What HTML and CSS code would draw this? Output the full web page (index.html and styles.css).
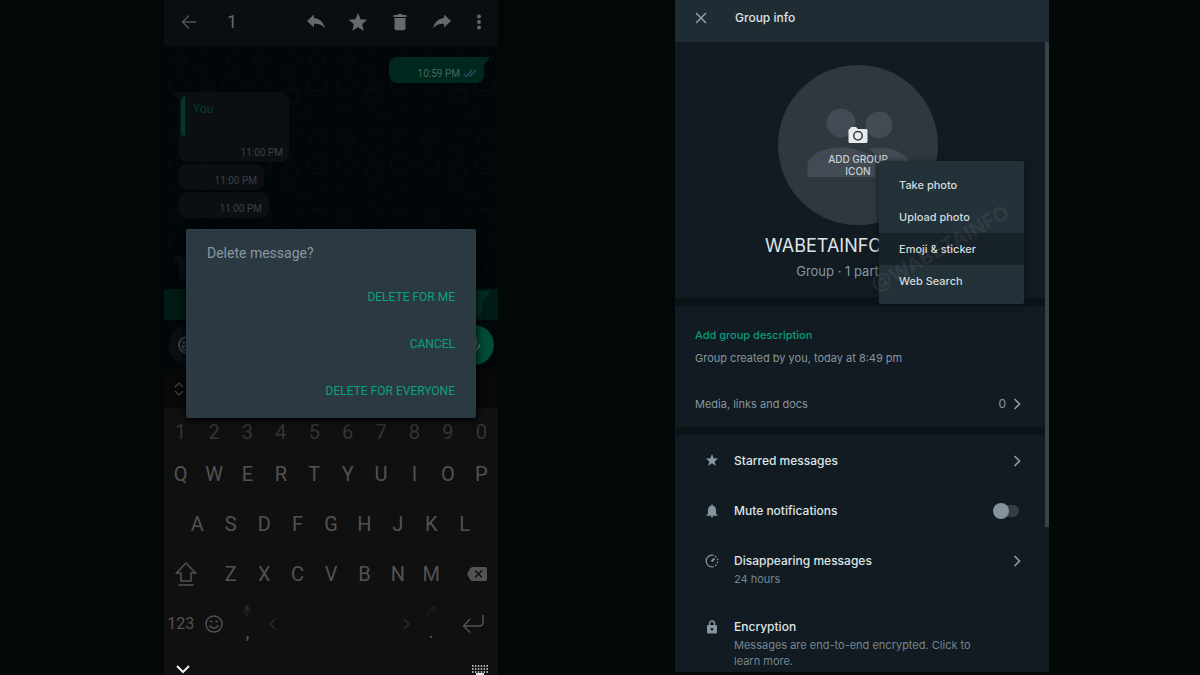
FILE: index.html
```html
<!DOCTYPE html>
<html lang="en">
<head>
<meta charset="utf-8">
<title>Group info</title>
<link rel="stylesheet" href="styles.css">
</head>
<body>
<main class="stage">
  <section class="phone" aria-label="Chat">
    <header class="action-bar">
      <button class="icon-btn back" aria-label="Back"><svg width="16" height="16" viewBox="0 0 16 16" fill="none" stroke="currentColor" stroke-width="1.5"><path d="M15 8H2M8 1.500L1.500 8L8 14.500"/></svg></button>
      <span class="count">1</span>
      <button class="icon-btn" aria-label="Reply"><svg width="20" height="20" viewBox="0 0 20 20" fill="currentColor"><path d="M8 6V2.500L1 9l7 6.500V11.800c5 0 8.500 1.200 11 4.700C18 11.500 15 7 8 6z"/></svg></button>
      <button class="icon-btn" aria-label="Star"><svg width="20" height="20" viewBox="0 0 20 20" fill="currentColor"><path d="M10 1l2.600 6.200 6.700.6-5.100 4.400 1.500 6.600L10 15.300l-5.700 3.500 1.500-6.600L.7 7.800l6.700-.6z"/></svg></button>
      <button class="icon-btn" aria-label="Delete"><svg width="20" height="20" viewBox="0 0 20 20" fill="currentColor"><path d="M4.500 6h11v10.500a1.700 1.700 0 0 1-1.700 1.700H6.200a1.700 1.700 0 0 1-1.700-1.700zM3.500 3H7l1-1h4l1 1h3.500v2h-13z"/></svg></button>
      <button class="icon-btn" aria-label="Forward"><svg width="20" height="20" viewBox="0 0 20 20" fill="currentColor"><path d="M12 6V2.500L19 9l-7 6.500V11.800c-5 0-8.500 1.200-11 4.700C2 11.500 5 7 12 6z"/></svg></button>
      <button class="icon-btn more" aria-label="More options"><svg width="6" height="20" viewBox="0 0 6 20" fill="currentColor"><circle cx="3" cy="4.500" r="1.900"/><circle cx="3" cy="10" r="1.900"/><circle cx="3" cy="15.500" r="1.900"/></svg></button>
    </header>

    <div class="chat">
      <svg class="doodles" width="100%" height="100%" aria-hidden="true">
        <defs>
          <pattern id="doodle" width="84" height="78" patternUnits="userSpaceOnUse">
            <g fill="none" stroke="#050c10" stroke-width="1">
              <circle cx="14" cy="14" r="8"/><circle cx="14" cy="14" r="4"/>
              <path d="M34 8q6-8 12 0t12 0M30 24l10-6 9 8-8 7zM66 6l12 5-6 12-10-6z"/>
              <path d="M6 36q8-9 15 0t-6 13q-13-3-9-13zM34 44h16v12H34zM38 44v-5h8v5"/>
              <circle cx="69" cy="40" r="10"/><path d="M64 42q5 6 10 0M4 66l10-7 9 9M32 68q8-10 15 0t16 0M68 60l9 9M77 60l-9 9"/>
              <path d="M25 30l5 5M54 30l-4 6M56 62q4-5 8-1M24 56l4-5"/>
            </g>
          </pattern>
        </defs>
        <rect width="100%" height="100%" fill="url(#doodle)"/>
      </svg>
      <div class="thread">
        <div class="bubble out"><time>10:59 PM</time><svg width="14" height="9" viewBox="0 0 14 9" fill="none" stroke="#23516a" stroke-width="1.400"><path d="M1 5l2.500 2.500L9 1M6.500 7.500L13 1"/></svg></div>
        <div class="bubble in quoted">
          <div class="quote">You</div>
          <time>11:00 PM</time>
        </div>
        <div class="bubble in short"><time>11:00 PM</time></div>
        <div class="bubble in medium"><time>11:00 PM</time></div>
      </div>
      <div class="hidden-bubble"></div>
      <div class="selected-row"><div class="selected-bubble"></div></div>
      <div class="composer">
        <div class="composer-field"><svg width="20" height="20" viewBox="0 0 20 20" fill="none" stroke="currentColor" stroke-width="2"><circle cx="10" cy="10" r="8"/><path d="M5.500 11h9a4.500 4.500 0 0 1-9 0z"/><circle cx="7" cy="7.500" r=".7"/><circle cx="13" cy="7.500" r=".7"/></svg></div>
        <button class="mic" aria-label="Record voice message"><svg width="20" height="20" viewBox="0 0 20 20" fill="none" stroke="currentColor" stroke-width="1.600"><rect x="7.800" y="2" width="4.400" height="9" rx="2.200" fill="currentColor"/><path d="M4.500 9.500a5.500 5.500 0 0 0 11 0M10 15v3"/></svg></button>
      </div>
    </div>

    <div class="suggestions"><svg width="10" height="14" viewBox="0 0 10 14" fill="none" stroke="currentColor" stroke-width="1.200"><path d="M1 5l4-4 4 4M1 9l4 4 4-4"/></svg></div>

    <div class="keyboard">
      <div class="keys digits"><button>1</button><button>2</button><button>3</button><button>4</button><button>5</button><button>6</button><button>7</button><button>8</button><button>9</button><button>0</button></div>
      <div class="keys"><button>Q</button><button>W</button><button>E</button><button>R</button><button>T</button><button>Y</button><button>U</button><button>I</button><button>O</button><button>P</button></div>
      <div class="keys home"><button>A</button><button>S</button><button>D</button><button>F</button><button>G</button><button>H</button><button>J</button><button>K</button><button>L</button></div>
      <div class="keys lower">
        <button class="shift" aria-label="Shift"><svg width="24" height="26" viewBox="0 0 24 26" fill="none" stroke="currentColor" stroke-width="1.500"><path d="M12 2L2.500 12H7v8h10v-8h4.500zM4.500 24h15"/></svg></button>
        <button>Z</button><button>X</button><button>C</button><button>V</button><button>B</button><button>N</button><button>M</button>
        <button class="erase" aria-label="Backspace"><svg width="20" height="14" viewBox="0 0 20 14"><path d="M5.500 0H18.500a1.500 1.500 0 0 1 1.500 1.500v11a1.500 1.500 0 0 1-1.500 1.500H5.500Q4 14 3 12.500L0 7l3-5.500Q4 0 5.500 0z" fill="currentColor"/><path d="M8 3.500l7 7M15 3.500l-7 7" stroke="#111" stroke-width="1.500"/></svg></button>
      </div>
      <div class="keys bottom">
        <button class="num">123</button>
        <button aria-label="Emoji"><svg width="18" height="18" viewBox="0 0 18 18" fill="none" stroke="currentColor" stroke-width="1.400"><circle cx="9" cy="9" r="8"/><path d="M4.500 10.500q4.500 5.500 9 0"/><path d="M5.300 7q1-1.500 2 0M10.700 7q1-1.500 2 0"/></svg></button>
        <button class="stack"><svg class="dim" width="10" height="12" viewBox="0 0 10 12" fill="none" stroke="currentColor"><rect x="3.500" y="1" width="3" height="5" rx="1.500" fill="currentColor"/><path d="M1.500 5a3.500 3.500 0 0 0 7 0M5 8.500V11"/></svg><span>,</span></button>
        <button class="space" aria-label="Space"><svg width="7" height="12" viewBox="0 0 7 12" fill="none" stroke="currentColor" stroke-width="1.200"><path d="M6 1L1 6l5 5"/></svg><svg width="7" height="12" viewBox="0 0 7 12" fill="none" stroke="currentColor" stroke-width="1.200"><path d="M1 1l5 5-5 5"/></svg></button>
        <button class="stack"><span class="dim alt">,!?</span><span>.</span></button>
        <button aria-label="Enter"><svg width="22" height="18" viewBox="0 0 22 18" fill="none" stroke="currentColor" stroke-width="1.500"><path d="M21 0v7q0 4-4 4H1.500M8 4L1.500 11 8 17.500"/></svg></button>
      </div>
      <div class="nav-row">
        <svg width="14" height="9" viewBox="0 0 14 9" fill="none" stroke="#eee" stroke-width="2"><path d="M1 1l6 6 6-6"/></svg>
        <svg width="16" height="10" viewBox="0 0 16 10" fill="none" stroke="#ddd"><path d="M0 1h16M0 4h16M0 7h16" stroke-width="1.500" stroke-dasharray="1.500 1.400"/><path d="M4 9h8" stroke-width="2"/></svg>
      </div>
    </div>

    <div class="dialog" role="dialog" aria-labelledby="dialog-title">
      <h2 id="dialog-title">Delete message?</h2>
      <button>DELETE FOR ME</button>
      <button>CANCEL</button>
      <button>DELETE FOR EVERYONE</button>
    </div>
  </section>

  <section class="panel" aria-label="Group info">
    <header class="panel-head">
      <button aria-label="Close"><svg width="12" height="12" viewBox="0 0 12 12" fill="none" stroke="currentColor" stroke-width="1.600"><path d="M1 1l10 10M11 1L1 11"/></svg></button>
      <h1>Group info</h1>
    </header>
    <div class="panel-body">
      <div class="scrollbar"></div>
      <div class="profile">
        <div class="avatar-wrap">
          <button class="avatar">
            <svg class="people" viewBox="0 0 160 160" fill="#424a53" aria-hidden="true"><circle cx="63" cy="58" r="14.500"/><circle cx="101" cy="60" r="13.500"/><path d="M29.500 112V101C29.500 89 47 82.500 63 82.500S97 89 97 101V112z"/><path d="M91 84Q97 83 102 83C117 83 132 90 132 101V112H101V101Q101 90 91 84z"/></svg>
            <svg class="camera" width="20" height="18" viewBox="0 0 20 18"><path d="M2 3Q2 1 4 1H8L10 3H18Q19.500 3 19.500 4.500V15.500Q19.500 17 18 17H2Q.5 17 .5 15.500V4Q.5 3 2 3z" fill="#e6eaed"/><circle cx="10" cy="9.800" r="4.200" fill="none" stroke="#343d43" stroke-width="1.500"/></svg>
            <span>ADD GROUP<br>ICON</span>
          </button>
          <div class="menu" role="menu">
            <button role="menuitem">Take photo</button>
            <button role="menuitem">Upload photo</button>
            <button role="menuitem" class="active">Emoji &amp; sticker</button>
            <button role="menuitem">Web Search</button>
            <span class="watermark">@WABETAINFO</span>
          </div>
        </div>
        <h2>WABETAINFO GROUP</h2>
        <p>Group · 1 participant</p>
      </div>

      <div class="about">
        <a class="add-desc" href="#">Add group description</a>
        <p>Group created by you, today at 8:49 pm</p>
        <button class="media"><span>Media, links and docs</span><span class="total">0</span><svg width="8" height="12" viewBox="0 0 8 12" fill="none" stroke="currentColor" stroke-width="1.700"><path d="M1.500 1l5 5-5 5"/></svg></button>
      </div>

      <div class="settings">
        <button class="row">
          <svg width="12" height="12" viewBox="0 0 20 20" fill="currentColor"><path d="M10 0l2.800 6.900 7.200.6-5.500 4.800 1.700 7.200L10 15.600l-6.200 3.900 1.700-7.200L0 7.500l7.200-.6z"/></svg>
          <span class="label">Starred messages</span>
          <svg class="chevron" width="8" height="12" viewBox="0 0 8 12" fill="none" stroke="currentColor" stroke-width="1.700"><path d="M1.500 1l5 5-5 5"/></svg>
        </button>
        <label class="row">
          <svg width="12" height="14" viewBox="0 0 12 14" fill="currentColor"><path d="M6 .5q1 0 1 1.200Q10 2.600 10 6v3.500l1.500 1.500v.7H.5V11L2 9.500V6q0-3.400 3-4.300Q5 .5 6 .5zM4.600 12.300h2.800q-.3 1.300-1.400 1.300t-1.400-1.300z"/></svg>
          <span class="label">Mute notifications</span>
          <input class="switch" type="checkbox">
        </label>
        <button class="row">
          <svg width="14" height="14" viewBox="0 0 14 14" fill="none" stroke="currentColor" stroke-width="1.300"><path d="M7 1.200A5.800 5.800 0 1 0 7 12.800"/><path d="M7 1.200A5.800 5.800 0 0 1 7 12.800" stroke-dasharray="1.600 1.600"/><path d="M6.500 7.500L9.500 4.500" stroke-width="1.800"/></svg>
          <span class="label">Disappearing messages<small>24 hours</small></span>
          <svg class="chevron" width="8" height="12" viewBox="0 0 8 12" fill="none" stroke="currentColor" stroke-width="1.700"><path d="M1.500 1l5 5-5 5"/></svg>
        </button>
        <button class="row">
          <svg width="12" height="14" viewBox="0 0 12 14"><path d="M3.500 6V3.500a2.500 2.500 0 0 1 5 0V6" fill="none" stroke="currentColor" stroke-width="1.400"/><rect x="1" y="5" width="10" height="8.500" rx="1" fill="currentColor"/><circle cx="6" cy="9.200" r="1.300" fill="#111b21"/></svg>
          <span class="label">Encryption<small>Messages are end-to-end encrypted. Click to learn more.</small></span>
        </button>
      </div>
    </div>
  </section>
</main>
</body>
</html>
```
FILE: styles.css
```css
* { box-sizing: border-box; }
body { margin: 0; background: #010807; }
h1, h2, p { margin: 0; font-weight: 400; }
button { margin: 0; padding: 0; border: 0; background: none; color: inherit; font: inherit; cursor: pointer; }
svg { display: block; flex: none; }

.stage {
  display: grid;
  grid-template-columns: 164fr 334fr 177fr 374fr 151fr;
  height: 100vh;
  overflow: hidden;
  background: #010807;
}

/* Phone */
.phone {
  grid-column: 2;
  position: relative;
  display: flex;
  flex-direction: column;
  min-width: 0;
  min-height: 0;
  font-family: Roboto, sans-serif;
  background: #010609;
}
.action-bar {
  display: flex;
  align-items: center;
  gap: 22px;
  padding: 12px 16px 14px 17px;
  background: #0a0e11;
  color: #666869;
}
.icon-btn { display: flex; }
.back { color: #4f5254; }
.more { padding-left: 2px; }
.count { flex: 1; padding-left: 8px; font-size: 18px; line-height: 20px; }

.chat { position: relative; padding-bottom: 5px; }
.doodles { position: absolute; inset: 0; }
.thread {
  position: relative;
  display: flex;
  flex-direction: column;
  align-items: flex-start;
  gap: 2px;
  padding: 11px 14px 0 15px;
}
.bubble {
  position: relative;
  display: flex;
  align-items: flex-end;
  justify-content: flex-end;
  min-height: 26px;
  padding: 0 7px 3px;
  border-radius: 8px;
  background: #0b0f12;
  color: #3c4042;
  font-size: 10px;
  line-height: 13px;
}
.out {
  align-self: flex-end;
  align-items: center;
  gap: 3px;
  width: 95px;
  margin-bottom: 7px;
  padding-top: 6px;
  padding-bottom: 0;
  background: #00281f;
  color: #4b675f;
}
.out::after, .quoted::before, .hidden-bubble::before {
  content: "";
  position: absolute;
  top: 0;
  width: 14px;
  height: 10px;
  background: inherit;
}
.out::after { right: -6px; clip-path: polygon(0 0, 100% 0, 50% 100%); }
.quoted::before { left: -6px; clip-path: polygon(0 0, 100% 0, 50% 100%); }
.quoted {
  flex-direction: column;
  justify-content: space-between;
  width: 110px;
  min-height: 70px;
  padding: 4px 6px 3px 2px;
}
.quote {
  align-self: stretch;
  height: 40px;
  padding: 6px 0 0 8px;
  border-left: 4px solid #01382c;
  border-radius: 3px;
  color: #033b30;
  font-size: 12px;
  line-height: 14px;
}
.short { width: 85px; }
.medium { width: 90px; }
.hidden-bubble {
  position: relative;
  height: 26px;
  width: 100px;
  margin: 38px 0 7px 15px;
  border-radius: 8px;
  background: #0b0f12;
}
.hidden-bubble::before { left: -6px; clip-path: polygon(0 0, 100% 0, 50% 100%); }
.selected-row { position: relative; padding: 2px 8px 3px; background: #001a15; }
.selected-bubble { height: 26px; margin-left: 200px; background: #002d23; clip-path: polygon(0 0, 100% 0, 94% 40%, 92% 100%, 0 100%); }
.composer { position: relative; display: flex; gap: 4px; padding: 5px 4px 0 5px; }
.composer-field { flex: 1; display: flex; align-items: center; height: 40px; padding-left: 8px; border-radius: 20px; background: #0b0f12; color: #3b3e40; }
.mic { display: flex; align-items: center; justify-content: center; width: 40px; height: 40px; border-radius: 50%; background: #004a38; color: #61756e; }

.suggestions { display: flex; align-items: center; height: 38px; padding-left: 10px; background: #080808; color: #454545; }
.keyboard { flex: 1; display: flex; flex-direction: column; padding-top: 6px; background: #101010; color: #525252; font-size: 20px; }
.keys { display: grid; grid-template-columns: repeat(10, 1fr); height: 50px; line-height: 24px; }
.keys button { display: flex; align-items: center; justify-content: center; min-width: 0; }
.digits { height: 35px; color: #353535; }
.home { grid-template-columns: repeat(9, 1fr); padding: 0 5%; }
.lower { grid-template-columns: 3fr repeat(7, 2fr) 3fr; }
.keys .shift { padding-right: 6px; }
.keys .erase { padding-left: 8px; }
.bottom { grid-template-columns: 2fr 2fr 2fr 9fr 2fr 3fr; }
.num { font-size: 16px; }
.keys .stack { flex-direction: column; justify-content: space-between; padding: 6px 0 6px; }
.stack span { line-height: 24px; }
.dim { color: #2b2b2b; }
.stack .alt { font-size: 9px; line-height: 12px; }
.keys .space { justify-content: space-between; padding: 0 5px; color: #303030; }
.nav-row { display: flex; justify-content: space-between; padding: 16px 10px 0 12px; }

.dialog {
  position: absolute;
  top: 229px;
  left: 22px;
  right: 22px;
  display: flex;
  flex-direction: column;
  align-items: flex-end;
  gap: 27px;
  padding: 14px 21px 17px;
  border-radius: 2px;
  background: #2a3942;
  box-shadow: 0 2px 8px #000;
  color: #0ba07f;
  font-size: 12px;
  line-height: 20px;
}
.dialog h2 { align-self: flex-start; margin-bottom: -3px; color: #8996a0; font-size: 14px; }

/* Group panel */
.panel {
  grid-column: 4;
  display: flex;
  flex-direction: column;
  min-width: 0;
  min-height: 0;
  margin-bottom: 3px;
  font-family: Inter, sans-serif;
  background: #111b21;
  color: #8696a0;
  font-size: 11px;
}
.panel-head { display: flex; align-items: center; gap: 28px; padding: 8px 20px 14px; background: #202c33; }
.panel-head button { color: #8d9ba3; }
.panel-head h1 { color: #dde2e5; font-size: 12px; font-weight: 500; line-height: 20px; }
.panel-body { position: relative; flex: 1; min-height: 0; overflow: hidden; }
.scrollbar { position: absolute; z-index: 1; top: 0; right: 0; width: 4px; height: 77%; background: #394248; }
.profile { display: flex; flex-direction: column; align-items: center; padding: 23px 8px 18px 0; border-bottom: 8px solid #0b1318; text-align: center; }
.avatar-wrap { position: relative; }
.avatar {
  position: relative;
  display: flex;
  flex-direction: column;
  align-items: center;
  gap: 9px;
  width: 160px;
  height: 160px;
  padding-top: 61px;
  border-radius: 50%;
  background: #2f383e;
  color: #cbd0d3;
  font-size: 10px;
  font-weight: 500;
  line-height: 12px;
}
.people { position: absolute; inset: 0; }
.camera, .avatar span { position: relative; }
.menu {
  position: absolute;
  top: 96px;
  left: 101px;
  width: 145px;
  padding: 8px 0 7px;
  border-radius: 2px;
  background: #233138;
  box-shadow: 0 2px 6px #0b1318;
  color: #d3dadd;
  font-size: 11px;
  font-weight: 500;
  line-height: 32px;
}
.menu button { display: block; width: 100%; padding-left: 20px; text-align: left; }
.menu .active { background: #182229; }
.watermark {
  position: absolute;
  top: 72px;
  left: -16px;
  color: #ffffff14;
  font-size: 20px;
  font-weight: 700;
  transform: rotate(-30deg);
  pointer-events: none;
}
.profile h2 { margin-top: 9px; color: #dfe4e6; font-size: 18px; line-height: 24px; }
.profile p { margin-top: 4px; font-size: 13px; line-height: 18px; }

.about { display: flex; flex-direction: column; padding: 20px 28px 14px 20px; border-bottom: 8px solid #0b1318; line-height: 18px; }
.add-desc { margin-bottom: 5px; color: #0a9c7c; text-decoration: none; font-weight: 500; }
.media { display: flex; align-items: center; gap: 7px; margin-top: 28px; text-align: left; }
.media span:first-child { flex: 1; }
.total { font-size: 12px; }

.settings { display: flex; flex-direction: column; padding: 16px 28px 0 30px; }
.row { display: grid; grid-template-columns: 13px 1fr auto; column-gap: 16px; align-items: start; justify-items: start; margin-bottom: 30px; text-align: left; cursor: pointer; }
.row > svg { margin-top: 3px; justify-self: center; }
.row > .chevron { margin-top: 4px; }
.label { color: #dfe4e6; font-size: 12px; font-weight: 500; line-height: 20px; }
.label small { display: block; max-width: 250px; color: #758690; font-size: 11px; font-weight: 400; line-height: 16px; }
.switch { appearance: none; position: relative; width: 24px; height: 12px; margin: 4px 2px 4px 0; border-radius: 6px; background: #323d44; }
.switch::before { content: ""; position: absolute; top: -2px; left: -2px; width: 16px; height: 16px; border-radius: 50%; background: #84929b; }
```
